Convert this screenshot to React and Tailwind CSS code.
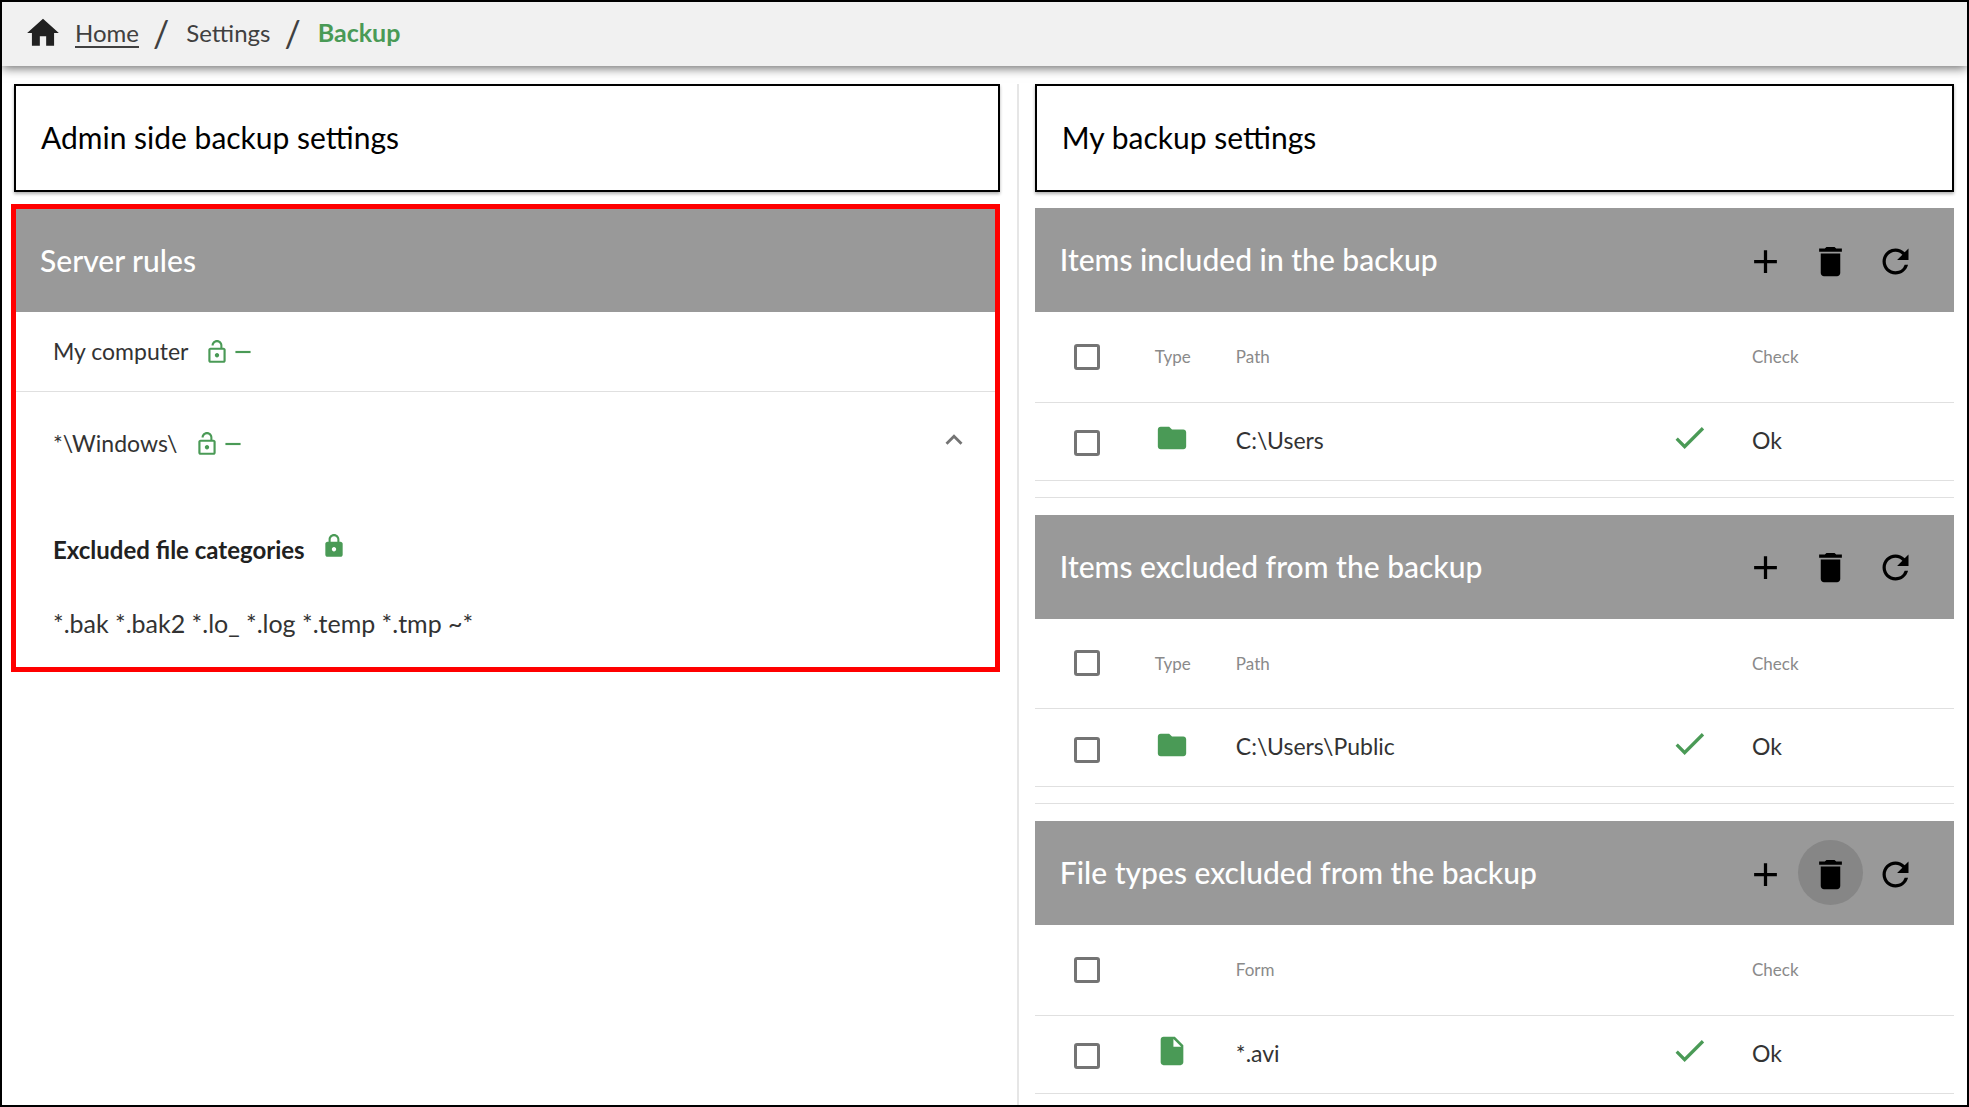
import React from "react";
import {
  MdAdd,
  MdCheck,
  MdDelete,
  MdExpandLess,
  MdFolder,
  MdHome,
  MdInsertDriveFile,
  MdLock,
  MdLockOpen,
  MdRefresh,
  MdRemove,
} from "react-icons/md";

const sections = [
  {
    title: "Items included in the backup",
    typeLabel: "Type",
    nameLabel: "Path",
    rows: [{ icon: "folder", name: "C:\\Users", status: "Ok" }],
  },
  {
    title: "Items excluded from the backup",
    typeLabel: "Type",
    nameLabel: "Path",
    rows: [{ icon: "folder", name: "C:\\Users\\Public", status: "Ok" }],
  },
  {
    title: "File types excluded from the backup",
    typeLabel: "",
    nameLabel: "Form",
    deleteActive: true,
    rows: [{ icon: "file", name: "*.avi", status: "Ok" }],
  },
];

function Checkbox({ label }) {
  return (
    <input
      type="checkbox"
      aria-label={label}
      className="block size-[26px] appearance-none rounded-[3px] border-3 border-[#747474] bg-white checked:bg-[#4a9a56]"
    />
  );
}

function IconButton({ label, active, children }) {
  return (
    <button
      type="button"
      aria-label={label}
      className={
        "flex size-[65px] items-center justify-center rounded-full pt-1 text-[39px] text-black " +
        (active ? "bg-[#868686]" : "")
      }
    >
      {children}
    </button>
  );
}

function TitleCard({ children }) {
  return (
    <h1 className="border-2 border-black bg-white px-[25px] pt-[31px] pb-[33px] text-[30px] leading-10 text-black shadow-[0_2px_3px_rgba(0,0,0,0.3)]">
      {children}
    </h1>
  );
}

function Slash() {
  return (
    <span aria-hidden="true" className="mr-[17px] ml-[14px] text-[36px] leading-10">
      /
    </span>
  );
}

function Section({ section }) {
  return (
    <section className="mb-[17px] border-b border-[#e0e0e0] pb-4 last:mb-0">
      <header className="flex h-[104px] items-center justify-between bg-[#999999] pr-[26px] pb-0.5 pl-[25px]">
        <h2 className="text-[30px] leading-10 font-medium text-white">{section.title}</h2>
        <div className="flex">
          <IconButton label="Add">
            <MdAdd />
          </IconButton>
          <IconButton label="Delete" active={section.deleteActive}>
            <MdDelete />
          </IconButton>
          <IconButton label="Refresh">
            <MdRefresh />
          </IconButton>
        </div>
      </header>
      <table className="w-full table-fixed border-collapse text-left">
        <colgroup>
          <col className="w-[120px]" />
          <col className="w-[81px]" />
          <col />
          <col className="w-[82px]" />
          <col className="w-[202px]" />
        </colgroup>
        <thead>
          <tr className="h-[90px] border-b border-[#e0e0e0] text-[17px] text-[#8a8a8a]">
            <th className="pl-[39px]">
              <Checkbox label={"Select all: " + section.title} />
            </th>
            <th className="font-normal">{section.typeLabel}</th>
            <th className="font-normal">{section.nameLabel}</th>
            <th />
            <th className="font-normal">Check</th>
          </tr>
        </thead>
        <tbody>
          {section.rows.map((row) => (
            <tr key={row.name} className="h-[78px] border-b border-[#e0e0e0] text-[23px] text-[#333333]">
              <td className="pt-1 pl-[39px]">
                <Checkbox label={"Select " + row.name} />
              </td>
              <td className="pb-1.5 text-[34px] text-[#4a9a56]">
                {row.icon === "folder" ? <MdFolder /> : <MdInsertDriveFile />}
              </td>
              <td className="pb-0.5">{row.name}</td>
              <td className="pb-2 text-[39px] text-[#4a9a56]">
                <MdCheck />
              </td>
              <td className="pb-0.5">{row.status}</td>
            </tr>
          ))}
        </tbody>
      </table>
    </section>
  );
}

export default function App() {
  return (
    <div className="flex h-screen flex-col overflow-hidden border-2 border-black bg-white font-['Lato','Open_Sans',sans-serif]">
      <nav
        aria-label="Breadcrumb"
        className="relative flex h-16 shrink-0 items-center bg-[#f1f1f1] pb-0.5 pl-[22px] text-[24px] text-[#404040] shadow-[0_2px_10px_rgba(0,0,0,0.6)]"
      >
        <MdHome className="mr-[13px] text-[38px] text-[#212121]" />
        <a href="#home" className="underline decoration-2 underline-offset-4">
          Home
        </a>
        <Slash />
        <a href="#settings">Settings</a>
        <Slash />
        <span className="text-[25px] font-bold text-[#4a9a56]">Backup</span>
      </nav>

      <main className="flex min-h-0 flex-1 pt-[18px] pr-[13px] pl-[9px]">
        <div className="flex min-w-0 flex-[1007] flex-col pr-[17px]">
          <div className="mb-3 pl-[3px]">
            <TitleCard>Admin side backup settings</TitleCard>
          </div>
          <section className="border-5 border-[#ff0000] text-[23px] text-[#333333]">
            <h2 className="flex h-[103px] items-center bg-[#999999] pl-6 text-[30px] font-medium text-white">
              Server rules
            </h2>
            <div className="flex h-20 items-center gap-4 border-b border-[#e0e0e0] pl-[37px]">
              <span>My computer</span>
              <span className="flex text-[26px] text-[#4a9a56]">
                <MdLockOpen />
                <MdRemove />
              </span>
            </div>
            <div className="flex h-[103px] items-center gap-4 pl-[37px]">
              <span>*\Windows\</span>
              <span className="flex text-[26px] text-[#4a9a56]">
                <MdLockOpen />
                <MdRemove />
              </span>
              <button type="button" aria-label="Collapse" className="mr-6 ml-auto pb-2 text-[34px] text-[#747474]">
                <MdExpandLess />
              </button>
            </div>
            <div className="flex h-[108px] items-center gap-4 pt-0.5 pl-[37px]">
              <h3 className="text-[24px] font-bold text-[#212121]">Excluded file categories</h3>
              <MdLock className="mb-2 text-[26px] text-[#4a9a56]" />
            </div>
            <p className="h-16 pl-[37px] text-[25px] leading-10">*.bak *.bak2 *.lo_ *.log *.temp *.tmp ~*</p>
          </section>
        </div>
        <div className="min-w-0 flex-[936] border-l-2 border-[#e6e6e6] pl-4">
          <div className="mb-4">
            <TitleCard>My backup settings</TitleCard>
          </div>
          {sections.map((section) => (
            <Section key={section.title} section={section} />
          ))}
        </div>
      </main>
    </div>
  );
}
